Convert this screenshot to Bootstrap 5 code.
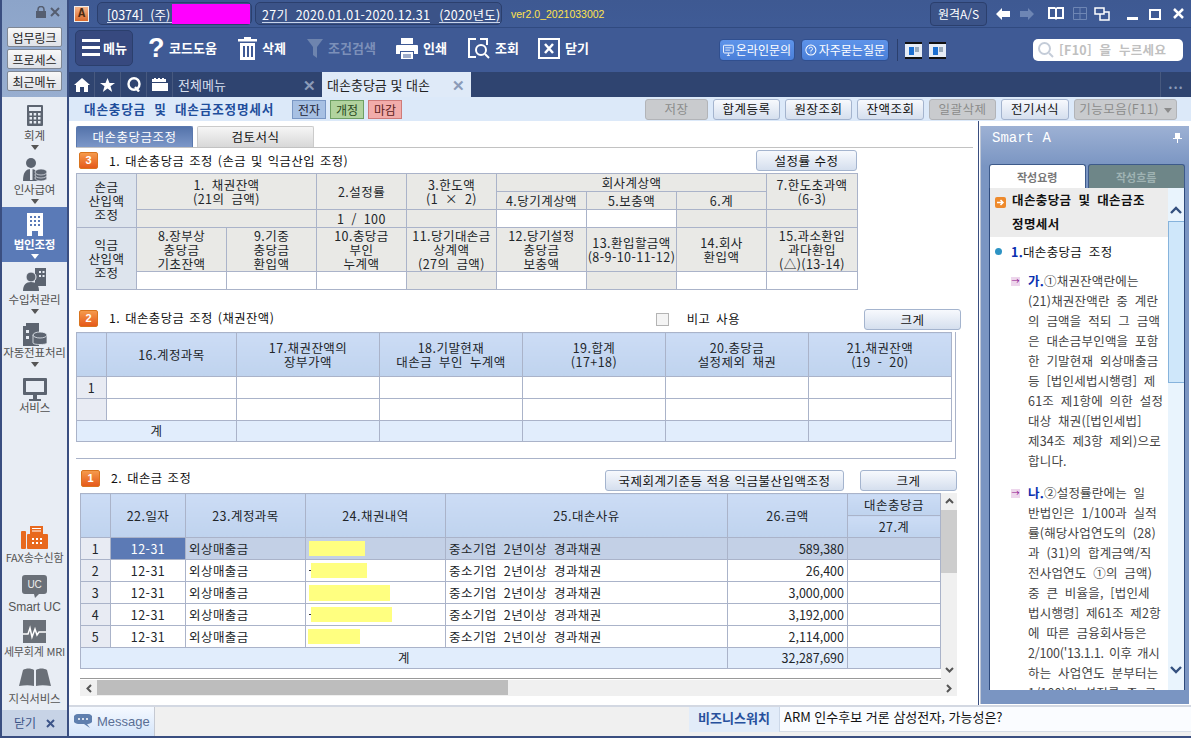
<!DOCTYPE html>
<html lang="ko">
<head>
<meta charset="utf-8">
<title>대손충당금 및 대손금조정명세서</title>
<link rel="stylesheet" href="https://cdn.jsdelivr.net/npm/bootstrap@5.3.0/dist/css/bootstrap.min.css">
<style>
html,body{margin:0;height:738px;overflow:hidden;background:#33466f;font-family:"Noto Sans CJK KR","Liberation Sans",sans-serif;font-size:13px;line-height:14px;color:#111}
.app{width:1191px;height:738px;padding:0 2px 2px;background:#3a4e80}
.side{width:65px;flex:none;background:#e8edf4;margin-right:2px}
.side-top{height:97px;background:linear-gradient(#8ca4c9,#98aed0);padding-top:3px}
.lockrow{height:24px;padding:0 7px 6px 0;gap:4px}
.sidebtn{display:block;width:55px;height:20px;margin:0 0 2px 5px;background:linear-gradient(#f8f8f8,#dfe2e8);border:1px solid #7f8794;border-radius:2px;font-size:12px;line-height:17px;text-align:center;color:#222;padding:0}
.sitem{height:55px;text-align:center;color:#505050;font-size:11.5px;line-height:13px;padding-top:6px;white-space:nowrap;letter-spacing:-.2px}
.sitem svg{display:block;margin:0 auto 2px}
.sitem svg.cal{margin-top:2px;margin-bottom:3px}
.sitem svg.tight{margin-bottom:0}
.sitem svg.tighter{margin-bottom:-1px}
.sitem.act{background:#5a7ab7;color:#fff;font-weight:700}
.tri{width:0;height:0;border:4.5px solid transparent;border-top:5px solid #555;border-bottom:0;margin:3px auto 0}
.act .tri{border-top-color:#fff}
.sitem2{text-align:center;color:#555;font-size:11px;line-height:13px;white-space:nowrap;letter-spacing:-.2px}
.sitem2 svg{display:block;margin:0 auto 2px}
.s49{height:49px}.s45{height:45px}.s48{height:48px}.s42{height:42px}
.s42 svg{margin-bottom:5px}
.s42{font-size:11.5px}
.uc-l{font:12px/13px "Liberation Sans",sans-serif;letter-spacing:0}
.sideclose{height:26px;background:#c7d3e6;color:#3c5488;font-size:12px;gap:10px}
.rt{width:1122px;flex:none}
.topb{height:27px;background:linear-gradient(#3e5992,#3f5b96);color:#fff;padding-left:5px}
.alogo{width:15px;height:16px;background:linear-gradient(#f5b48a,#d96a2c);border:1px solid #eee;color:#4a2a10;font:700 12px/14px "Liberation Mono",monospace;text-align:center;margin-right:8px}
.pill{height:23px;border:1px solid #2b3f6d;border-radius:5px;background:#3b5388;padding:0 5px;margin-right:3px;color:#fff;font-size:12.5px;white-space:pre}
.pill1{width:155px;padding:0 0 0 9px}.pill2{width:247px;padding-left:6px}
.ul{border-bottom:1px solid #c8d4ea;line-height:15px;margin-top:2px}
.co{width:65px;flex:none;letter-spacing:0}
.per{letter-spacing:.25px}.per2{margin-left:9px;letter-spacing:.25px}
.magenta{width:78px;height:20px;background:#f0f;margin:1px 0 0 0;flex:none}
.ver{color:#ffe34d;font:10.5px "Liberation Sans",sans-serif;margin-left:6px}
.remote{height:24px;width:57px;border:1px solid #2b3f6d;border-radius:4px;background:#3b5388;color:#fff;font-size:12px;line-height:22px;text-align:center;margin-right:9px}
.wicons{margin-right:7px}
.m9{margin-right:9px}.m10{margin-right:10px}.m14{margin-right:14px}.m7{margin-right:7px}.m17{margin-right:17px}.m11{margin-right:11px}.m12{margin-right:12px}
.tool{height:45px;background:#3f5a95;border-top:1px solid #304a80;color:#fff;font-weight:700;padding-left:6px}
.menubtn{width:58px;height:36px;border:1px solid #2b3f6d;border-radius:5px;background:#37497f;gap:3px;padding-left:6px;margin-right:15px;margin-top:-5px}
.ti{font-size:13px;gap:5px;white-space:nowrap;margin-top:-4px}
.ti.t90{width:90px}.ti.t69{width:69px}.ti.t89{width:89px;color:#7c90b9}.ti.t72{width:72px}.ti.t70{width:70px}.ti.t60{width:60px}
.qm{font:700 27px/30px "Liberation Sans",sans-serif;width:15px;margin-right:1px}
.helpbtn{height:22px;background:linear-gradient(#5e94ea,#4a7fd8);border:1px solid #304f8f;border-radius:4px;color:#fff;font-size:12px;font-weight:400;gap:2px;padding:0 3px;white-space:nowrap;margin-right:6px}
.hb1{width:76px}.hb2{width:88px}
.vsep{width:1px;height:22px;background:#2b3f6d;margin:0 7px 0 2px}
.smallwin{margin-right:7px}
.search{width:150px;height:22px;background:#fff;border-radius:5px;color:#c0c0c0;font-weight:700;font-size:12.5px;margin:0 8px 0 80px;padding-left:5px;gap:5px;white-space:pre;letter-spacing:.3px}
.tabs{height:25px;background:#2f4470;color:#fff}
.tabi{width:26px;height:25px;border-right:1px solid #47597f;flex:none}
.tabm{width:149px;height:25px;padding:0 6px 0 5px;color:#d7dfee;flex:none}
.tabm.on{background:#dfeaf8;color:#222;height:25px}
.xx{color:#8b9bb8;font-size:15px;font-weight:700}
.tabmore{width:31px;height:25px;border-left:1px solid #47597f;color:#8b9bb8;letter-spacing:1px;font-weight:700;text-align:center;line-height:24px}
.titler{height:24px;background:#dce9f9;padding-left:15px;flex:none}
.ttl{font-weight:700;color:#1f4e9c;font-size:12.6px;width:208px;white-space:nowrap;word-spacing:4px;letter-spacing:.8px}
.stat{width:34px;height:19px;border:1px solid #7a97c4;background:#a7c0e3;text-align:center;font-size:12px;line-height:17px;margin-right:4px;color:#223}
.st2{background:#b1d39e;border-color:#6e9f63;color:#2a4a22}.st3{background:#f2acaa;border-color:#cf7b79;color:#5a2020}
.btn.sbtn{height:21px;padding:0;font-size:12.5px;line-height:18px;color:#111;background:linear-gradient(#f7f9fd,#d5dfee);border:1px solid #a4b4ce;border-radius:3px;white-space:nowrap;letter-spacing:.5px}
.btn.sbtn.off{background:#c9cbce;color:#8b8b8b;border-color:#b2b4b8}
.rbtns{gap:5px;margin-right:14px;margin-left:auto}
.b63{width:63px}.b67{width:67px}.b68{width:68px}.b103{width:103px}
.downtri{display:inline-block;width:0;height:0;border:4px solid transparent;border-top:5px solid #8b8b8b;border-bottom:0;margin-left:5px;vertical-align:middle}
.work{height:584px;flex:none}
.mainp{width:909px;flex:none;background:#fff;padding-left:7px}
.itabs{margin-top:5px;height:22px;width:897px;border-bottom:1px solid #c2c2c2;gap:4px}
.itab{width:117px;height:21px;text-align:center;line-height:19px;background:linear-gradient(#f6f6f6,#d8d8d8);border:1px solid #cbcbcb;border-bottom:0;border-radius:2px 2px 0 0;font-size:12.5px;letter-spacing:.5px}
.itab.on{background:linear-gradient(#5473aa,#7c97c8);color:#fff;border-color:#5a78ae}
.shead{white-space:pre}
.sh3{width:781px;height:25px}
.sh2{width:885px;height:23px;margin-top:19px}
.sh1{width:877px;height:23px;margin:11px 0 0 4px}
.badgen{width:19px;height:17px;flex:none;background:linear-gradient(#f59a4c,#e5591a);border:1px solid #d9741e;border-radius:2px;color:#fff;font:700 11px/15px "Liberation Sans",sans-serif;text-align:center;margin:0 11px 0 3px}
.sh2 .badgen{margin-top:1px}
.sh1 .badgen{margin-left:1px}
.sh2 .sttl{margin-top:2px}
.sh1 .sttl{margin-top:1px}
.sttl{font-size:12.3px;letter-spacing:.5px;word-spacing:1px}
.chk{width:13px;height:13px;border:1px solid #b4b4b4;background:#f4f4f4;flex:none;margin:4px 18px 0 0}
.bigo{margin:3px 124px 0 0;letter-spacing:.5px;word-spacing:2px;font-size:12.3px}
.b101{width:101px}.b97{width:97px}.b239{width:239px}
.gap16{margin-left:16px}
.grid{table-layout:fixed;border-collapse:collapse;margin:0;--bs-table-border-color:#aab3c9;--bs-table-bg:#fff;font-size:12.5px;line-height:14px;letter-spacing:.45px;word-spacing:3px}
.grid>:not(caption)>*>*{padding:0;text-align:center;vertical-align:middle;border:1px solid #aab3c9;white-space:nowrap}
.g1{width:781px}.g2{width:875px}.g3{width:860px}
.c30{width:30px}.c60{width:60px}.c75{width:75px}.c90{width:90px}.c91{width:91px}.c120{width:120px}.c130{width:130px}.c140{width:140px}.c143{width:143px}.c282{width:282px}.c93{width:93px}
.r18>*{height:18px}.r22>*{height:22px}.r21>*{height:21px}.r44>*{height:44px}
.cg{--bs-table-bg:#e9e9e6}.cl{--bs-table-bg:#dde4ed}.cn{--bs-table-bg:#e8ebf3}.ct{--bs-table-bg:#e1edfc}.cs{--bs-table-bg:#c3d0e6}.cc{--bs-table-bg:#5c7ab5;color:#fff}
.grid>:not(caption)>*>.ch{background:linear-gradient(#ccdcf5,#bfd3ee)}
.grid>:not(caption)>*>.tl{text-align:left;padding-left:3px}
.grid>:not(caption)>*>.tr{text-align:right;padding-right:3px;letter-spacing:0}
.frame2{width:880px;height:127px;border:1px solid #aab3c9;border-width:0 1px 1px 0}
.gridwrap{width:877px;margin-left:4px;height:187px}
.gw{width:861px;height:186px;border-bottom:1px solid #999}
.vbar{width:16px;height:187px;background:#f0f0f0}
.vbar svg{display:block;margin:0 auto}
.vup{padding-top:5px;height:17px}
.vth{height:63px;background:#cdcdcd}
.vdn{margin-top:94px}
.hbar{width:877px;height:16px;background:#f0f0f0;margin-left:4px}
.hth{width:411px;height:15px;background:#bdbdbd}
.chev{width:17px;flex:none;height:16px}
.chev svg{display:block;margin:4px auto 0}
.y{display:block;flex:none;height:15px;background:#ffff80}
.y1{width:56px}.y2{width:56px}.y3{width:81px;height:16px}.y4{width:81px}.y5{width:52px;margin-left:-1px}
.rowy{display:flex;align-items:center;height:100%;padding-left:3px}
.dot{width:2px;height:1px;background:#333;flex:none}
.panel{flex:1;background:#fff;border-left:1px solid #3a4e80;padding-top:5px}
.pbox{margin-left:1px;width:209px;height:578px;background:linear-gradient(#9db1d4 0,#7a95c2 40px);border-left:1px solid #bfc7d6;padding:0 4px 0 8px}
.ph{height:38px;color:#fff;font:14px/24px "Liberation Mono",monospace;padding:0 0 0 3px}
.ptabs{height:24px;gap:2px}
.ptab{width:97px;height:24px;border-radius:3px 3px 0 0;background:#fff;color:#777;font-size:11px;font-weight:700;line-height:24px;text-align:center;border:1px solid #3d5a8a;border-bottom:0}
.ptab.off{width:98px;background:#6e8688;color:#9fb3b3}
.pc{width:196px;height:502px;overflow:hidden;background:#fff;border:solid #2e4a7c;border-width:0 1px}
.pcm{width:178px;flex:none;overflow:hidden}
.pt{height:49px;background:#ececec;font-weight:700;font-size:12.5px;line-height:24px;padding:0 0 0 22px;word-spacing:3px;letter-spacing:.4px;position:relative;white-space:nowrap}
.oico{position:absolute;left:5px;top:9px;width:11px;height:11px;background:#ee8a2c;border-radius:2px}
.oico svg{display:block;margin:1px}
.h1l{height:30px;padding:8px 0 0 21px;font-size:12.5px;position:relative;word-spacing:3px;letter-spacing:.3px;white-space:nowrap}
.h1l b{color:#0a2fb0}
.dotb{position:absolute;left:5px;top:11px;width:7px;height:7px;border-radius:50%;background:#2d93c4}
.ptxt{padding-left:38px;color:#444;font-size:12.5px;line-height:20px;white-space:nowrap;word-spacing:3px;letter-spacing:.2px;position:relative;margin-bottom:12px;margin-top:4px}
.ptxt+.ptxt{margin-top:0}
.ptxt b{color:#0a2fb0}
.tgt{letter-spacing:-.2px;word-spacing:2px}
.pico{position:absolute;left:21px;top:6px;width:9px;height:9px;background:#edd6ec;color:#8a0a8a;font-size:8px;line-height:8px;text-align:center}
.psb{width:16px;flex:none;background:#e9f4fd}
.psb svg{display:block;margin:0 auto}
.pup{height:27px;padding-top:18px}
.psth{height:162px;background:#cfe7fa;border:1px solid #86b3dc;border-width:1px 0 1px 1px;margin-top:6px}
.pdn{margin-top:283px}
.bot{height:31px;background:#f0f0f0;border-top:2px solid #d3d8e2;flex:none}
.msg{width:86px;background:linear-gradient(#f5f9ff,#d5e5fa);color:#5a6e94;font-size:13px;gap:5px;padding-left:5px;font-family:"Liberation Sans",sans-serif;border-right:1px solid #c5c9d2}
.biz{width:91px;margin-left:534px;background:#e2ecf9;color:#27509c;font-weight:700;height:25px;text-align:center;line-height:22px;border-right:1px solid #ccd8e8;flex:none}
.news{flex:1;background:#fafcff;height:25px;line-height:20px;padding-left:4px;font-size:13px;border-bottom:1px solid #d6dce6;white-space:nowrap}
</style>
</head>
<body>
<div class="app d-flex">
  <aside class="side d-flex flex-column">
    <div class="side-top">
      <div class="lockrow d-flex justify-content-end align-items-center">
        <svg width="10" height="12" viewBox="0 0 10 12"><path d="M2 5V3.500a3 3 0 0 1 6 0V5" fill="none" stroke="#555e70" stroke-width="1.500"/><rect y="5" width="10" height="7" fill="#555e70"/></svg>
        <svg width="10" height="10" viewBox="0 0 10 10"><path d="M1 1l8 8M9 1L1 9" stroke="#555e70" stroke-width="2"/></svg>
      </div>
      <button class="sidebtn">업무링크</button>
      <button class="sidebtn">프로세스</button>
      <button class="sidebtn">최근메뉴</button>
    </div>
    <div class="sitem">
      <svg class="cal" width="16" height="21" viewBox="0 0 16 21"><rect width="16" height="21" rx="1" fill="#5c6470"/><rect x="2" y="2" width="12" height="4" fill="#e8edf4"/><g fill="#e8edf4"><rect x="2.500" y="8" width="2.500" height="2.500"/><rect x="6.700" y="8" width="2.500" height="2.500"/><rect x="11" y="8" width="2.500" height="2.500"/><rect x="2.500" y="12" width="2.500" height="2.500"/><rect x="6.700" y="12" width="2.500" height="2.500"/><rect x="11" y="12" width="2.500" height="2.500"/><rect x="2.500" y="16" width="2.500" height="2.500"/><rect x="6.700" y="16" width="2.500" height="2.500"/><rect x="11" y="16" width="2.500" height="2.500"/></g></svg>
      회계<div class="tri"></div>
    </div>
    <div class="sitem">
      <svg width="24" height="23" viewBox="0 0 24 23"><circle cx="8" cy="5" r="5" fill="#5c6470"/><path d="M0 23c0-9 3-12 8-12s7 3 7 12z" fill="#5c6470"/><rect x="7" y="11" width="2.500" height="11" fill="#e8edf4"/><g fill="#5c6470" stroke="#e8edf4" stroke-width=".7"><ellipse cx="18" cy="20" rx="6" ry="3"/><ellipse cx="18" cy="17" rx="6" ry="3"/><ellipse cx="18" cy="14" rx="6" ry="3"/></g></svg>
      인사급여<div class="tri"></div>
    </div>
    <div class="sitem act">
      <svg width="16" height="23" viewBox="0 0 16 23"><path d="M0 0h16v23h-5v-5H5v5H0z" fill="#fff"/><g fill="#5a7ab7"><rect x="3" y="3" width="2" height="2"/><rect x="7" y="3" width="2" height="2"/><rect x="11" y="3" width="2" height="2"/><rect x="3" y="7" width="2" height="2"/><rect x="7" y="7" width="2" height="2"/><rect x="11" y="7" width="2" height="2"/><rect x="3" y="11" width="2" height="2"/><rect x="7" y="11" width="2" height="2"/><rect x="11" y="11" width="2" height="2"/></g></svg>
      법인조정<div class="tri"></div>
    </div>
    <div class="sitem">
      <svg width="23" height="23" viewBox="0 0 23 23"><path d="M12 0h11v18H12z" fill="#5c6470"/><g fill="#e8edf4"><rect x="16" y="3" width="2" height="2"/><rect x="19.500" y="3" width="2" height="2"/><rect x="16" y="7" width="2" height="2"/><rect x="19.500" y="7" width="2" height="2"/></g><circle cx="8" cy="9" r="5" fill="#5c6470" stroke="#e8edf4"/><path d="M0 23c0-6 3-9 8-9s8 3 8 9z" fill="#5c6470"/></svg>
      수입처관리<div class="tri"></div>
    </div>
    <div class="sitem">
      <svg class="tight" width="24" height="23" viewBox="0 0 24 23"><rect x="3" width="13" height="3" fill="#5c6470"/><rect y="3" width="16" height="20" fill="#5c6470"/><g fill="#e8edf4"><rect x="3" y="7" width="3" height="3"/><rect x="3" y="13" width="3" height="3"/></g><g fill="#5c6470" stroke="#e8edf4" stroke-width=".8"><path d="M10 12h14v8c0 2-14 2-14 0z"/><ellipse cx="17" cy="12" rx="7" ry="3"/></g></svg>
      자동전표처리<div class="tri"></div>
    </div>
    <div class="sitem">
      <svg class="tighter" width="24" height="24" viewBox="0 0 24 24"><rect width="24" height="17" rx="1" fill="#5c6470"/><rect x="3" y="3" width="18" height="11" fill="#e8edf4"/><rect x="10" y="17" width="4" height="4" fill="#5c6470"/><rect x="6" y="21" width="12" height="2" fill="#5c6470"/></svg>
      서비스
    </div>
    <div class="mt-auto">
      <div class="sitem2 s49">
        <svg width="27" height="23" viewBox="0 0 27 23"><rect y="5" width="5" height="18" rx="1" fill="#e8691e"/><rect x="6" y="8" width="21" height="15" rx="1" fill="#e8691e"/><rect x="9" y="0" width="13" height="9" fill="#e8691e"/><g fill="#fff"><rect x="11" y="2" width="9" height="1"/><rect x="11" y="4.500" width="9" height="1"/><rect x="11" y="12" width="2" height="2"/><rect x="15" y="12" width="2" height="2"/><rect x="19" y="12" width="2" height="2"/><rect x="11" y="16" width="2" height="2"/><rect x="15" y="16" width="2" height="2"/><rect x="19" y="16" width="2" height="2"/></g></svg>
        FAX송수신함
      </div>
      <div class="sitem2 s45">
        <svg width="25" height="23" viewBox="0 0 25 23"><path d="M3 0h19a3 3 0 0 1 3 3v13a3 3 0 0 1-3 3h-5l-4 4-1-4H3a3 3 0 0 1-3-3V3a3 3 0 0 1 3-3z" fill="#6a7078"/><text x="12.500" y="13" font-size="10" fill="#eee" text-anchor="middle" font-family="Liberation Sans">UC</text></svg>
        <span class="uc-l">Smart UC</span>
      </div>
      <div class="sitem2 s48">
        <svg width="23" height="23" viewBox="0 0 23 23"><rect width="23" height="23" fill="#6a7078"/><path d="M0 14h5l2-6 2 9 3-8 2 6 2-3h7" fill="none" stroke="#fff" stroke-width="1.500"/></svg>
        세무회계 MRI
      </div>
      <div class="sitem2 s42">
        <svg width="32" height="19" viewBox="0 0 32 19"><path d="M4 2c3-2 8-2 11 0v16c-4-1-9-1-15 0zM17 2c3-2 8-2 11 0l4 16c-6-1-11-1-15 0z" fill="#6a7078"/></svg>
        <span>지식서비스</span>
      </div>
      <div class="sideclose d-flex align-items-center justify-content-center">닫기
        <svg width="9" height="9" viewBox="0 0 9 9"><path d="M1 1l7 7M8 1L1 8" stroke="#3c5488" stroke-width="2"/></svg>
      </div>
    </div>
  </aside>

  <div class="rt d-flex flex-column">
    <header class="topb d-flex align-items-center">
      <div class="alogo">A</div>
      <div class="pill pill1 d-flex align-items-center"><span class="ul co">[0374]  (주)</span><span class="magenta"></span></div>
      <div class="pill pill2 d-flex align-items-center"><span class="ul per">27기  2020.01.01-2020.12.31</span><span class="ul per2">(2020년도)</span></div>
      <span class="ver">ver2.0_2021033002</span>
      <div class="ms-auto d-flex align-items-center">
        <div class="remote">원격A/S</div>
        <div class="wicons d-flex align-items-center">
          <svg width="14" height="12" class="m10" viewBox="0 0 14 12"><path d="M0 6l6-6v3h8v6H6v3z" fill="#fff"/></svg>
          <svg width="14" height="12" class="m14" viewBox="0 0 14 12"><path d="M14 6L8 0v3H0v6h8v3z" fill="#6e86b4"/></svg>
          <svg width="16" height="13" class="m9" viewBox="0 0 16 13"><path d="M0 0h7l1 1 1-1h7v12H9l-1 1-1-1H0zM2 2v8h5V2zm7 0v8h5V2z" fill="#fff"/></svg>
          <svg width="14" height="13" class="m7" viewBox="0 0 14 13"><path d="M.5.500h13v12H.5zM.5 6.500h13M7 .5v12" fill="none" stroke="#6e86b4"/></svg>
          <svg width="16" height="14" class="m17" viewBox="0 0 16 14"><path d="M1 1h9v6H1zM10 5h5v8H6V7" fill="none" stroke="#fff" stroke-width="1.500"/></svg>
          <svg width="11" height="12" class="m11" viewBox="0 0 11 12"><rect y="9" width="11" height="3" fill="#fff"/></svg>
          <svg width="12" height="12" class="m12" viewBox="0 0 12 12"><path d="M1 2h10v9H1z" fill="none" stroke="#fff" stroke-width="2"/></svg>
          <svg width="11" height="11" viewBox="0 0 11 11"><path d="M1 1l9 9M10 1l-9 9" stroke="#fff" stroke-width="2.500"/></svg>
        </div>
      </div>
    </header>

    <nav class="tool d-flex align-items-center">
      <div class="menubtn d-flex align-items-center">
        <svg width="18" height="17" viewBox="0 0 18 17"><path d="M0 0h18v3H0zM0 7h18v3H0zM0 14h18v3H0z" fill="#fff"/></svg>메뉴
      </div>
      <div class="ti t90 d-flex align-items-center"><span class="qm">?</span>코드도움</div>
      <div class="ti t69 d-flex align-items-center">
        <svg width="19" height="23" viewBox="0 0 19 23"><path d="M6 0h7v2h6v2.500H0V2h6zM2 6h15v17H2zM5 9v11h2V9zm4 0v11h2V9zm4 0v11h2V9z" fill="#fff" fill-rule="evenodd"/></svg>삭제</div>
      <div class="ti t89 d-flex align-items-center">
        <svg width="16" height="19" viewBox="0 0 16 19"><path d="M0 0h16l-6 8v11l-4-3V8z" fill="#6e84ae"/></svg>조건검색</div>
      <div class="ti t72 d-flex align-items-center">
        <svg width="22" height="21" viewBox="0 0 22 21"><path d="M5 0h12v6H5zM1 7h20a1 1 0 0 1 1 1v8h-4v-3H4v3H0V8a1 1 0 0 1 1-1zM5 14h12v7H5z" fill="#fff"/><path d="M7 17h8M7 19h8" stroke="#3f5a95"/></svg>인쇄</div>
      <div class="ti t70 d-flex align-items-center">
        <svg width="22" height="21" viewBox="0 0 22 21"><path d="M8 1H1v18h7M12 1h7v6" fill="none" stroke="#fff" stroke-width="2"/><circle cx="13" cy="12" r="5" fill="none" stroke="#fff" stroke-width="2"/><path d="M17 16l4 4" stroke="#fff" stroke-width="2"/></svg>조회</div>
      <div class="ti t60 d-flex align-items-center">
        <svg width="22" height="21" viewBox="0 0 22 21"><rect x="1" y="1" width="20" height="19" fill="none" stroke="#fff" stroke-width="2"/><path d="M7 6l8 9M15 6l-8 9" stroke="#fff" stroke-width="2.500"/></svg>닫기</div>
      <div class="ms-auto d-flex align-items-center">
        <div class="helpbtn hb1 d-flex align-items-center">
          <svg width="14" height="15" viewBox="0 0 14 15"><rect x=".7" y=".7" width="12.600" height="10" rx="1" fill="none" stroke="#fff" stroke-width="1.200"/><path d="M3 4h8M3 7h6M5 14h4M7 11v3" stroke="#fff"/></svg>온라인문의</div>
        <div class="helpbtn hb2 d-flex align-items-center">
          <svg width="14" height="15" viewBox="0 0 14 15"><circle cx="7" cy="7" r="6" fill="none" stroke="#fff" stroke-width="1.200"/><path d="M5 5.500a2 2 0 1 1 2 2V9M7 10v1" fill="none" stroke="#fff"/></svg>자주묻는질문</div>
        <div class="vsep"></div>
        <svg width="17" height="17" class="smallwin" viewBox="0 0 17 17"><rect width="17" height="17" fill="#111"/><rect y="2" width="17" height="13" fill="#e6ecf5"/><rect x="4" y="5" width="5" height="8" fill="#1c6fd0"/><rect x="10" y="5" width="4" height="5" fill="#9ab"/></svg>
        <svg width="17" height="17" class="smallwin" viewBox="0 0 17 17"><rect width="17" height="17" fill="#111"/><rect y="2" width="17" height="13" fill="#e6ecf5"/><rect x="4" y="5" width="5" height="8" fill="#1c6fd0"/><rect x="10" y="5" width="4" height="5" fill="#9ab"/></svg>
        <div class="search d-flex align-items-center">
          <svg width="16" height="16" viewBox="0 0 16 16"><circle cx="6.500" cy="6.500" r="5.500" fill="none" stroke="#c4ccd8" stroke-width="2"/><path d="M11 11l4 4" stroke="#c4ccd8" stroke-width="2"/></svg>[F10]  을  누르세요</div>
      </div>
    </nav>

    <div class="tabs d-flex align-items-center">
      <div class="tabi d-flex align-items-center justify-content-center"><svg width="16" height="14" viewBox="0 0 16 14"><path d="M8 0l8 7h-2v7h-4V9H6v5H2V7H0z" fill="#fff"/></svg></div>
      <div class="tabi d-flex align-items-center justify-content-center"><svg width="15" height="14" viewBox="0 0 15 14"><path d="M7.500 0l2 5h5.500l-4.500 3.300L12.200 14 7.500 10.500 2.800 14l1.700-5.700L0 5h5.500z" fill="#fff"/></svg></div>
      <div class="tabi d-flex align-items-center justify-content-center"><svg width="14" height="15" viewBox="0 0 14 15"><ellipse cx="7" cy="7" rx="5.500" ry="5.800" fill="none" stroke="#fff" stroke-width="2.400"/><path d="M8 10l4 4.500" stroke="#fff" stroke-width="2.400"/></svg></div>
      <div class="tabi d-flex align-items-center justify-content-center"><svg width="16" height="13" viewBox="0 0 16 13"><path d="M0 1h2V0h2v1h2V0h2v1h2V0h2v1h2v3H0zM0 5h16v8H0z" fill="#fff"/></svg></div>
      <div class="tabm d-flex align-items-center justify-content-between">전체메뉴<span class="xx">✕</span></div>
      <div class="tabm on d-flex align-items-center justify-content-between">대손충당금 및 대손<span class="xx">✕</span></div>
      <div class="tabmore ms-auto">...</div>
    </div>

    <div class="titler d-flex align-items-center">
      <div class="ttl">대손충당금 및 대손금조정명세서</div>
      <div class="stat">전자</div><div class="stat st2">개정</div><div class="stat st3">마감</div>
      <div class="rbtns d-flex">
        <button class="btn sbtn off b63">저장</button>
        <button class="btn sbtn b67">합계등록</button>
        <button class="btn sbtn b67">원장조회</button>
        <button class="btn sbtn b67">잔액조회</button>
        <button class="btn sbtn off b67">일괄삭제</button>
        <button class="btn sbtn b68">전기서식</button>
        <button class="btn sbtn off b103">기능모음(F11)<span class="downtri"></span></button>
      </div>
    </div>

    <div class="work d-flex">
      <main class="mainp">
        <div class="itabs d-flex"><div class="itab on">대손충당금조정</div><div class="itab">검토서식</div></div>

        <div class="shead sh3 d-flex align-items-center">
          <span class="badgen">3</span><span class="sttl">1. 대손충당금 조정 (손금 및 익금산입 조정)</span>
          <button class="btn sbtn b101 ms-auto">설정률 수정</button>
        </div>
        <table class="table grid g1">
          <colgroup><col class="c60"><col class="c90"><col class="c90"><col class="c90"><col class="c90"><col class="c90"><col class="c90"><col class="c90"><col class="c91"></colgroup>
          <tbody>
            <tr class="r18"><td rowspan="3" class="cl">손금<br>산입액<br>조정</td><td colspan="2" rowspan="2" class="cg">1. 채권잔액<br>(21의 금액)</td><td rowspan="2" class="cg">2.설정률</td><td rowspan="2" class="cg">3.한도액<br>(1 × 2)</td><td colspan="3" class="cg">회사계상액</td><td rowspan="2" class="cg">7.한도초과액<br>(6-3)</td></tr>
            <tr class="r18"><td class="cg">4.당기계상액</td><td class="cg">5.보충액</td><td class="cg">6.계</td></tr>
            <tr class="r18"><td colspan="2" class="cg"></td><td class="cg">1 / 100</td><td class="cg"></td><td></td><td></td><td class="cg"></td><td class="cg"></td></tr>
            <tr class="r44"><td rowspan="2" class="cl">익금<br>산입액<br>조정</td><td class="cg">8.장부상<br>충당금<br>기초잔액</td><td class="cg">9.기중<br>충당금<br>환입액</td><td class="cg">10.충당금<br>부인<br>누계액</td><td class="cg">11.당기대손금<br>상계액<br>(27의 금액)</td><td class="cg">12.당기설정<br>충당금<br>보충액</td><td class="cg">13.환입할금액<br>(8-9-10-11-12)</td><td class="cg">14.회사<br>환입액</td><td class="cg">15.과소환입<br>과다환입<br>(△)(13-14)</td></tr>
            <tr class="r18"><td></td><td></td><td></td><td class="cg"></td><td></td><td class="cg"></td><td></td><td></td></tr>
          </tbody>
        </table>

        <div class="shead sh2 d-flex align-items-start">
          <span class="badgen">2</span><span class="sttl">1. 대손충당금 조정 (채권잔액)</span>
          <span class="chk ms-auto"></span><span class="bigo">비고 사용</span>
          <button class="btn sbtn b97">크게</button>
        </div>
        <div class="frame2">
          <table class="table grid g2">
            <colgroup><col class="c30"><col class="c130"><col class="c143"><col class="c143"><col class="c143"><col class="c143"><col class="c143"></colgroup>
            <tbody>
              <tr class="r44"><td class="ch"></td><td class="ch">16.계정과목</td><td class="ch">17.채권잔액의<br>장부가액</td><td class="ch">18.기말현재<br>대손금 부인 누계액</td><td class="ch">19.합계<br>(17+18)</td><td class="ch">20.충당금<br>설정제외 채권</td><td class="ch">21.채권잔액<br>(19 - 20)</td></tr>
              <tr class="r22"><td class="cn">1</td><td></td><td></td><td></td><td></td><td></td><td></td></tr>
              <tr class="r22"><td class="cn"></td><td></td><td></td><td></td><td></td><td></td><td></td></tr>
              <tr class="r21"><td colspan="2" class="ct">계</td><td class="ct"></td><td class="ct"></td><td class="ct"></td><td class="ct"></td><td class="ct"></td></tr>
            </tbody>
          </table>
        </div>

        <div class="shead sh1 d-flex align-items-start">
          <span class="badgen">1</span><span class="sttl">2. 대손금 조정</span>
          <button class="btn sbtn b239 ms-auto">국제회계기준등 적용 익금불산입액조정</button>
          <button class="btn sbtn b97 gap16">크게</button>
        </div>
        <div class="gridwrap d-flex">
          <div class="gw">
            <table class="table grid g3">
              <colgroup><col class="c30"><col class="c75"><col class="c120"><col class="c140"><col class="c282"><col class="c120"><col class="c93"></colgroup>
              <tbody>
                <tr class="r22"><td rowspan="2" class="ch"></td><td rowspan="2" class="ch">22.일자</td><td rowspan="2" class="ch">23.계정과목</td><td rowspan="2" class="ch">24.채권내역</td><td rowspan="2" class="ch">25.대손사유</td><td rowspan="2" class="ch">26.금액</td><td class="ch">대손충당금</td></tr>
                <tr class="r22"><td class="ch">27.계</td></tr>
                <tr class="r22"><td class="cn">1</td><td class="cc">12-31</td><td class="cs tl">외상매출금</td><td class="cs"><div class="rowy"><span class="y y1"></span></div></td><td class="cs tl">중소기업 2년이상 경과채권</td><td class="cs tr">589,380</td><td class="cs"></td></tr>
                <tr class="r22"><td class="cn">2</td><td>12-31</td><td class="tl">외상매출금</td><td><div class="rowy"><span class="dot"></span><span class="y y2"></span></div></td><td class="tl">중소기업 2년이상 경과채권</td><td class="tr">26,400</td><td></td></tr>
                <tr class="r22"><td class="cn">3</td><td>12-31</td><td class="tl">외상매출금</td><td><div class="rowy"><span class="y y3"></span></div></td><td class="tl">중소기업 2년이상 경과채권</td><td class="tr">3,000,000</td><td></td></tr>
                <tr class="r22"><td class="cn">4</td><td>12-31</td><td class="tl">외상매출금</td><td><div class="rowy"><span class="dot"></span><span class="y y4"></span></div></td><td class="tl">중소기업 2년이상 경과채권</td><td class="tr">3,192,000</td><td></td></tr>
                <tr class="r22"><td class="cn">5</td><td>12-31</td><td class="tl">외상매출금</td><td><div class="rowy"><span class="y y5"></span></div></td><td class="tl">중소기업 2년이상 경과채권</td><td class="tr">2,114,000</td><td></td></tr>
                <tr class="r21"><td colspan="5" class="ct">계</td><td class="ct tr">32,287,690</td><td class="ct"></td></tr>
              </tbody>
            </table>
          </div>
          <div class="vbar">
            <div class="vup"><svg width="9" height="6" viewBox="0 0 9 6"><path d="M1 5l3.500-3.500L8 5" fill="none" stroke="#555" stroke-width="2"/></svg></div>
            <div class="vth"></div>
            <div class="vdn"><svg width="9" height="6" viewBox="0 0 9 6"><path d="M1 1l3.500 3.500L8 1" fill="none" stroke="#555" stroke-width="2"/></svg></div>
          </div>
        </div>
        <div class="hbar d-flex">
          <span class="chev"><svg width="6" height="9" viewBox="0 0 6 9"><path d="M5 1L1.500 4.500 5 8" fill="none" stroke="#555" stroke-width="2"/></svg></span>
          <div class="hth me-auto"></div>
          <span class="chev"><svg width="6" height="9" viewBox="0 0 6 9"><path d="M1 1l3.500 3.500L1 8" fill="none" stroke="#555" stroke-width="2"/></svg></span>
        </div>
      </main>

      <aside class="panel">
        <div class="pbox">
          <div class="ph d-flex justify-content-between"><span>Smart A</span><svg width="9" height="10" class="mt-2 me-1" viewBox="0 0 9 10"><path d="M2 0h5v5h2v1H5v4H4V6H0V5h2z" fill="#fff"/></svg></div>
          <div class="ptabs d-flex"><div class="ptab">작성요령</div><div class="ptab off">작성흐름</div></div>
          <div class="pc d-flex">
            <div class="pcm">
              <div class="pt"><span class="oico"><svg width="9" height="9" viewBox="0 0 9 9"><path d="M1 4.500h6M4.500 2l2.500 2.500L4.500 7" fill="none" stroke="#fff" stroke-width="1.500"/></svg></span>대손충당금 및 대손금조<br>정명세서</div>
              <div class="h1l"><span class="dotb"></span><b>1.</b>대손충당금 조정</div>
              <div class="ptxt"><span class="pico">→</span><b>가.</b>①채권잔액란에는<br>(21)채권잔액란 중 계란<br>의 금액을 적되 그 금액<br>은 대손금부인액을 포함<br>한 기말현재 외상매출금<br>등 [법인세법시행령] 제<br>61조 제1항에 의한 설정<br>대상 채권([법인세법]<br>제34조 제3항 제외)으로<br>합니다.</div>
              <div class="ptxt"><span class="pico">→</span><b>나.</b>②설정률란에는 일<br>반법인은 1/100과 실적<br>률(해당사업연도의 (28)<br>과 (31)의 합계금액/직<br>전사업연도 ①의 금액)<br>중 큰 비율을, [법인세<br>법시행령] 제61조 제2항<br>에 따른 금융회사등은<br><span class="tgt">2/100('13.1.1. 이후 개시</span><br>하는 사업연도 분부터는<br>1/100)의 설정률 중 큰</div>
            </div>
            <div class="psb">
              <div class="pup"><svg width="12" height="8" viewBox="0 0 12 8"><path d="M1 7l5-5 5 5" fill="none" stroke="#34507f" stroke-width="2.400"/></svg></div>
              <div class="psth"></div>
              <div class="pdn"><svg width="12" height="8" viewBox="0 0 12 8"><path d="M1 1l5 5 5-5" fill="none" stroke="#34507f" stroke-width="2.400"/></svg></div>
            </div>
          </div>
        </div>
      </aside>
    </div>

    <footer class="bot d-flex">
      <div class="msg d-flex align-items-center">
        <svg width="18" height="15" viewBox="0 0 18 15"><path d="M4 0h10a4 4 0 0 1 0 10h-1l3 4-6-4H4A4 4 0 0 1 4 0z" fill="#5f7fae"/><g fill="#fff"><circle cx="5" cy="5" r="1"/><circle cx="9" cy="5" r="1"/><circle cx="13" cy="5" r="1"/></g></svg>Message</div>
      <div class="biz">비즈니스워치</div>
      <div class="news">ARM 인수후보 거론 삼성전자, 가능성은?</div>
    </footer>
  </div>
</div>
<script src="https://cdn.jsdelivr.net/npm/bootstrap@5.3.0/dist/js/bootstrap.bundle.min.js"></script>
</body>
</html>
